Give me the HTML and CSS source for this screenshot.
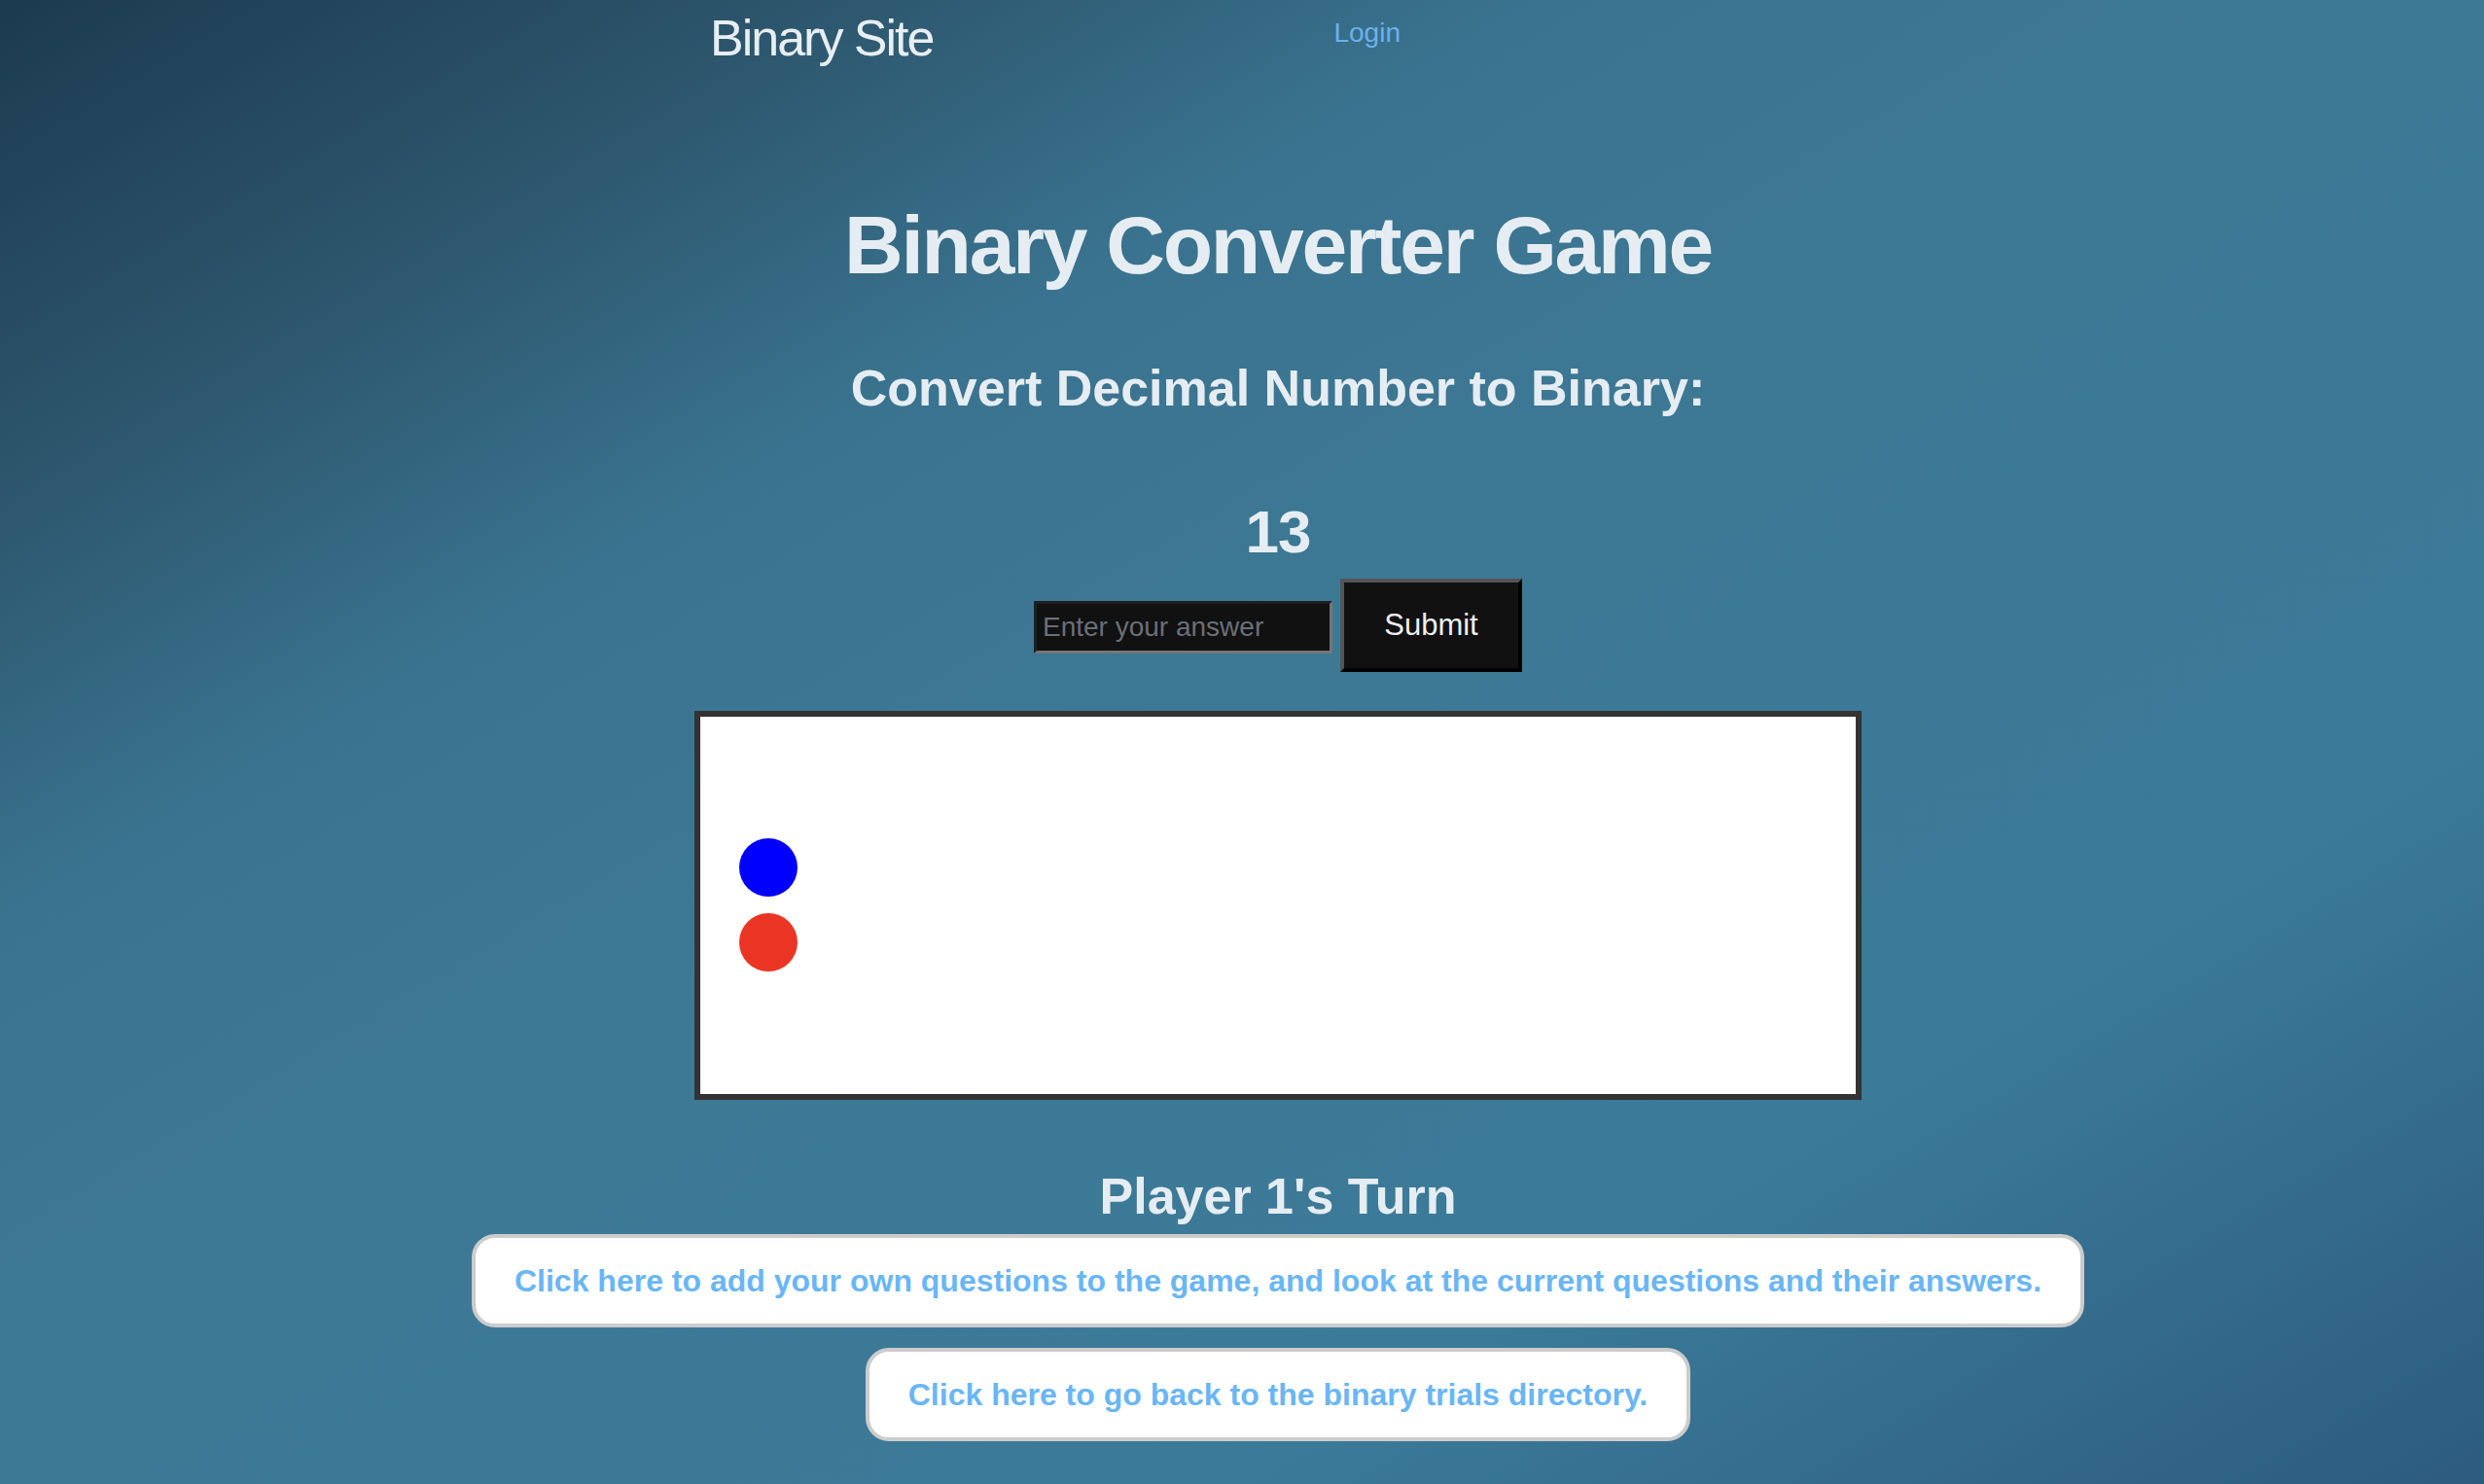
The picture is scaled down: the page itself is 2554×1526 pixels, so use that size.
FILE: index.html
```html
<!DOCTYPE html>
<html lang="en">
<head>
<meta charset="utf-8">
<title>Binary Converter Game</title>
<link rel="stylesheet" href="styles.css">
</head>
<body>
<header class="topbar">
  <a class="brand" href="#">Binary Site</a>
  <a class="login" href="#">Login</a>
</header>
<main class="game">
  <h1 class="title">Binary Converter Game</h1>
  <h2 class="prompt">Convert Decimal Number to Binary:</h2>
  <div class="number">13</div>
  <form class="answer-row" onsubmit="return false;">
    <input class="answer" type="text" placeholder="Enter your answer">
    <button class="submit" type="submit">Submit</button>
  </form>
  <div class="board">
    <svg class="board-svg" width="1188" height="388" viewBox="0 0 1188 388">
      <circle cx="70" cy="155" r="30" fill="#0000ff"/>
      <circle cx="70" cy="232" r="30" fill="#eb3524"/>
    </svg>
  </div>
  <h2 class="turn">Player 1's Turn</h2>
  <a class="pill pill-wide" href="#">Click here to add your own questions to the game, and look at the current questions and their answers.</a>
  <a class="pill" href="#">Click here to go back to the binary trials directory.</a>
</main>
</body>
</html>
```
FILE: styles.css
```css
html, body {
  margin: 0;
  padding: 0;
}
body {
  width: 2554px;
  min-height: 1526px;
  font-family: "Liberation Sans", Arial, Helvetica, sans-serif;
  color: #e6edf2;
  background: linear-gradient(to bottom right, #1c3a4f 0%, #2b5369 15%, #3a738f 31%, #3d7995 50%, #3b7a99 75%, #2d5b80 100%);
  overflow: hidden;
}
.topbar {
  display: flex;
  align-items: flex-start;
  padding: 13px 0 0 730px;
  height: 52px;
}
.brand {
  font-size: 52px;
  line-height: 52px;
  letter-spacing: -2px;
  color: #e8eef2;
  text-decoration: none;
}
.login {
  margin-left: 412px;
  margin-top: 7px;
  font-size: 28px;
  line-height: 28px;
  color: #6ab2ee;
  text-decoration: none;
}
.game {
  padding-left: 74px;
  display: flex;
  flex-direction: column;
  align-items: center;
  text-align: center;
}
.title {
  margin: 145px 0 0;
  font-size: 84px;
  line-height: 84px;
  letter-spacing: -2.2px;
  font-weight: bold;
}
.prompt {
  margin: 79px 0 0;
  font-size: 52px;
  line-height: 52px;
  font-weight: bold;
}
.number {
  margin-top: 91px;
  font-size: 62px;
  line-height: 62px;
  letter-spacing: -1px;
  font-weight: bold;
}
.answer-row {
  margin: 17px 0 0;
  display: flex;
  align-items: center;
  gap: 8px;
}
.answer {
  box-sizing: border-box;
  width: 307px;
  height: 54px;
  margin: 4px 0 0;
  padding: 0 6px;
  background: #111111;
  border-style: solid;
  border-width: 3px;
  border-color: #1f1f1f #767676 #767676 #1f1f1f;
  color: #e6e6e6;
  font-family: "Liberation Sans", Arial, sans-serif;
  font-size: 28px;
  outline: none;
}
.answer::placeholder {
  color: #6a6f78;
}
.submit {
  box-sizing: border-box;
  width: 187px;
  height: 96px;
  margin: 0;
  padding: 0;
  background: #111111;
  border-style: solid;
  border-width: 4px;
  border-color: #555555 #000000 #000000 #555555;
  color: #eeeeee;
  font-family: "Liberation Sans", Arial, sans-serif;
  font-size: 31px;
}
.board {
  margin-top: 40px;
  border: 6px solid #333333;
  background: #ffffff;
  width: 1188px;
  height: 388px;
}
.board-svg {
  display: block;
}
.turn {
  margin: 73px 0 0;
  font-size: 52px;
  line-height: 52px;
  font-weight: bold;
}
.pill {
  display: block;
  box-sizing: border-box;
  margin-top: 21px;
  padding: 25px 40px;
  background: #ffffff;
  border: 4px solid #cccccc;
  border-radius: 24px;
  color: #6ab6f4;
  font-size: 32px;
  line-height: 38px;
  font-weight: bold;
  text-decoration: none;
  white-space: nowrap;
}
.pill-wide {
  margin-top: 13px;
}
```
